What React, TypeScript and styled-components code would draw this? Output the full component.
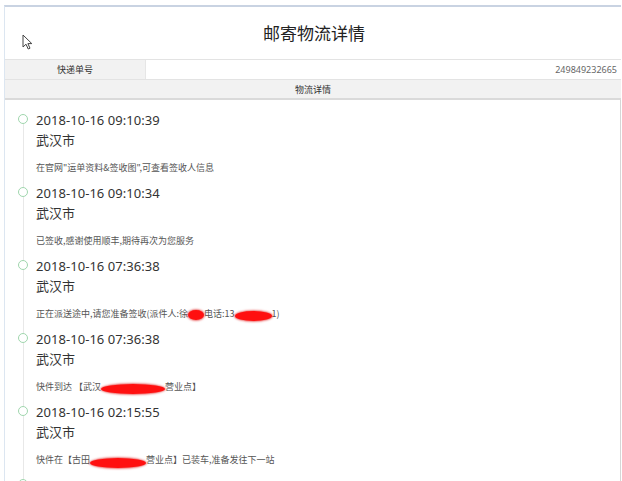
import React from "react";
import styled, { createGlobalStyle } from "styled-components";

const Global = createGlobalStyle`
  html, body { margin: 0; padding: 0; background: #fff; }
  body { font-family: "Noto Sans", "Noto Sans CJK SC", sans-serif; overflow: hidden; }
  * { box-sizing: border-box; }
`;

const Page = styled.div`
  padding: 5px 0 0 4px;
  width: 622px;
  height: 481px;
  overflow: hidden;
`;

const Panel = styled.div`
  width: 617px;
  border-top: 2px solid #c9d3e2;
  border-left: 1px solid #dce6f1;
`;

const Header = styled.div`
  position: relative;
  height: 52px;
  display: flex;
  align-items: center;
  justify-content: center;
  padding-bottom: 2px;
`;

const Title = styled.h1`
  margin: 0;
  font-family: "Noto Sans CJK SC", sans-serif;
  font-size: 17px;
  font-weight: 400;
  color: #222;
  padding-left: 2px;
`;

const Cursor = styled.svg`
  position: absolute;
  left: 17px;
  top: 27px;
`;

const Row = styled.div<{ $last?: boolean }>`
  display: flex;
  height: ${(p) => (p.$last ? 21 : 20)}px;
  border-top: 1px solid #e3e3e3;
  border-bottom: ${(p) => (p.$last ? "2px solid #dadada" : "none")};
  font-size: 9px;
  font-family: "Noto Sans", "Noto Sans CJK SC", sans-serif;
`;

const LabelCell = styled.div<{ $full?: boolean }>`
  flex: ${(p) => (p.$full ? "1" : "0 0 141px")};
  background: #f2f2f2;
  color: #333;
  display: flex;
  align-items: center;
  justify-content: center;
  border-right: ${(p) => (p.$full ? "none" : "1px solid #e6e6e6")};
`;

const ValueCell = styled.div`
  flex: 1;
  background: #fff;
  color: #666;
  display: flex;
  align-items: center;
  justify-content: flex-end;
  padding-right: 4px;
`;

const Timeline = styled.div`
  padding-top: 10px;
  border-right: 1px solid #d6d6d6;
  height: 400px;
`;

const Item = styled.div`
  position: relative;
  padding: 0 0 7px 31px;
  height: 73px;
`;

const Dot = styled.span`
  position: absolute;
  left: 13px;
  top: 4px;
  width: 10px;
  height: 10px;
  border-radius: 50%;
  border: 1.5px solid #9fd6ad;
  background: #fff;
  z-index: 1;
`;

const Line = styled.span`
  position: absolute;
  left: 17.5px;
  top: 14px;
  width: 1.5px;
  height: 63px;
  background: #e8e8e8;
`;

const Time = styled.div`
  font-size: 13px;
  line-height: 20px;
  color: #333;
  letter-spacing: 0.05px;
`;

const City = styled.div`
  font-family: "Noto Sans CJK SC", sans-serif;
  font-size: 13px;
  line-height: 20px;
  color: #333;
`;

const Desc = styled.div`
  margin-top: 10px;
  font-family: "Noto Sans CJK SC", sans-serif;
  font-size: 9px;
  line-height: 16px;
  color: #555;
  white-space: nowrap;
  display: flex;
  align-items: center;
`;

const Blob = styled.span<{ $w: number; $dy?: number }>`
  display: inline-block;
  width: ${(p) => p.$w}px;
  height: 10px;
  border-radius: 50%;
  background: #ff1010;
  box-shadow: 0 0 2px 1px rgba(220, 0, 0, 0.55);
  transform: translateY(${(p) => p.$dy ?? 1}px);
`;

type Part = string | { blob: number; dy?: number };

const items: { time: string; city: string; desc: Part[] }[] = [
  {
    time: "2018-10-16 09:10:39",
    city: "武汉市",
    desc: ["在官网\"运单资料&签收图\",可查看签收人信息"],
  },
  {
    time: "2018-10-16 09:10:34",
    city: "武汉市",
    desc: ["已签收,感谢使用顺丰,期待再次为您服务"],
  },
  {
    time: "2018-10-16 07:36:38",
    city: "武汉市",
    desc: ["正在派送途中,请您准备签收(派件人:徐", { blob: 16 }, "电话:13", { blob: 37, dy: 2 }, "1)"],
  },
  {
    time: "2018-10-16 07:36:38",
    city: "武汉市",
    desc: ["快件到达 【武汉", { blob: 64, dy: 2 }, "营业点】"],
  },
  {
    time: "2018-10-16 02:15:55",
    city: "武汉市",
    desc: ["快件在【古田", { blob: 56, dy: 3 }, "营业点】已装车,准备发往下一站"],
  },
  {
    time: "2018-10-16 01:36:21",
    city: "古田县",
    desc: ["快件已发车"],
  },
];

export default function App() {
  return (
    <>
      <Global />
      <Page>
        <Panel>
          <Header>
            <Cursor width="12" height="16" viewBox="0 0 12 16">
              <path
                d="M1 1 L1 13 L4 10.2 L6.2 15 L8 14.2 L5.9 9.6 L9.8 9.6 Z"
                fill="#fff"
                stroke="#444"
                strokeWidth="1"
                strokeLinejoin="round"
              />
            </Cursor>
            <Title>邮寄物流详情</Title>
          </Header>
          <Row>
            <LabelCell>快递单号</LabelCell>
            <ValueCell>249849232665</ValueCell>
          </Row>
          <Row $last>
            <LabelCell $full>物流详情</LabelCell>
          </Row>
          <Timeline>
            {items.map((it, i) => (
              <Item key={i}>
                <Dot />
                <Line />
                <Time>{it.time}</Time>
                <City>{it.city}</City>
                <Desc>
                  {it.desc.map((p, j) =>
                    typeof p === "string" ? (
                      <span key={j}>{p}</span>
                    ) : (
                      <Blob key={j} $w={p.blob} $dy={p.dy} />
                    )
                  )}
                </Desc>
              </Item>
            ))}
          </Timeline>
        </Panel>
      </Page>
    </>
  );
}
